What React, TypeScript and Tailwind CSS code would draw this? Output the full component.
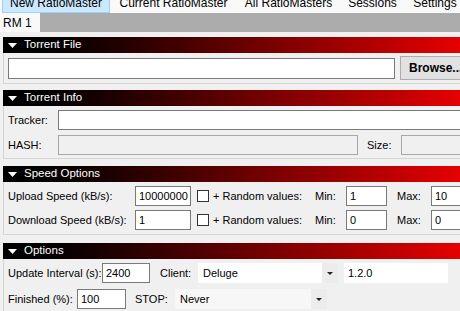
import React from 'react';

function Header({ title }: { title: string }) {
  return (
    <div className="flex h-[16px] items-center bg-gradient-to-r from-black via-[#6e0000] to-[#ff0000] text-[11.5px] text-white">
      <svg width="9" height="5" viewBox="0 0 9 5" className="ml-[5px] mr-[7px]">
        <polygon points="0,0 9,0 4.5,5" fill="#fff" />
      </svg>
      <span>{title}</span>
    </div>
  );
}

function Group({ title, children, className = '' }: { title: string; children: React.ReactNode; className?: string }) {
  return (
    <div className={`ml-[3px] ${className}`}>
      <Header title={title} />
      <div className="border border-t-0 border-[#d5d5d5] pl-[4px]">{children}</div>
    </div>
  );
}

function Input({ w, value = '', disabled = false, className = '' }: { w: string; value?: string; disabled?: boolean; className?: string }) {
  return (
    <div
      className={`flex h-[20px] items-center border px-[3px] ${w} ${
        disabled ? 'border-[#a8a8a8] bg-[#f0f0f0]' : 'border-[#7a7a7a] bg-white'
      } ${className}`}
    >
      {value}
    </div>
  );
}

function Check() {
  return <div className="ml-[6px] mr-[4px] h-[12px] w-[12px] border border-[#333] bg-white" />;
}

function Select({ w, value, bg }: { w: string; value: string; bg: string }) {
  return (
    <div className={`flex h-[20px] items-center ${w} ${bg}`}>
      <span className="flex-1 pl-[5px]">{value}</span>
      <div className="flex h-full w-[16px] items-center justify-center bg-[#ececec]">
        <svg width="6" height="3" viewBox="0 0 6 3">
          <polygon points="0,0 6,0 3,3" fill="#222" />
        </svg>
      </div>
    </div>
  );
}

const menu = [
  { label: 'New RatioMaster', w: 'w-[108px]' },
  { label: 'Current RatioMaster', w: 'w-[127px]' },
  { label: 'All RatioMasters', w: 'w-[103px]' },
  { label: 'Sessions', w: 'w-[65px]' },
  { label: 'Settings', w: 'w-[60px]' },
];

export default function App() {
  return (
    <div className="h-[311px] w-[460px] overflow-hidden bg-[#f0f0f0] font-['Liberation_Sans',Arial,sans-serif] text-[11px] text-black">
      <div className="w-[500px]">
        {/* menu strip, scrolled so text is clipped at top */}
        <div className="h-[13px] overflow-hidden bg-[#f9f9f9]">
          <div className="-mt-[7px] flex h-[20px] items-stretch pl-[2px] text-[12px]">
            {menu.map((m, i) => (
              <div
                key={m.label}
                className={`flex items-center justify-center whitespace-nowrap border ${m.w} ${
                  i === 0 ? 'border-[#99d1ff] bg-[#cce8ff]' : 'border-transparent'
                }`}
              >
                {m.label}
              </div>
            ))}
          </div>
        </div>

        {/* tab strip */}
        <div className="flex h-[19px]">
          <div className="flex w-[40px] items-center bg-[#f9f9f9] pl-[3px] text-[12px]">RM 1</div>
          <div className="flex-1 bg-[#acacac]" />
        </div>

        <div className="pt-[5px]">
          <Group title="Torrent File">
            <div className="flex items-center pb-[3px] pt-[3px]">
              <Input w="w-[387px]" className="h-[21px]" />
              <button className="ml-[5px] h-[24px] w-[76px] border border-[#adadad] bg-[#e1e1e1] pl-[8px] text-left text-[12px] font-bold">
                Browse...
              </button>
            </div>
          </Group>

          <Group title="Torrent Info" className="mt-[6px]">
            <div className="flex items-center pt-[4px]">
              <span className="w-[50px]">Tracker:</span>
              <Input w="w-[420px]" />
            </div>
            <div className="flex items-center pb-[3px] pt-[5px]">
              <span className="w-[50px]">HASH:</span>
              <Input w="w-[300px]" disabled />
              <span className="ml-[9px] w-[34px]">Size:</span>
              <Input w="w-[80px]" disabled />
            </div>
          </Group>

          <Group title="Speed Options" className="mt-[7px]">
            {[
              ['Upload Speed (kB/s):', '10000000', '1', '10'],
              ['Download Speed (kB/s):', '1', '0', '0'],
            ].map(([label, v, min, max], i) => (
              <div key={label} className={`flex items-center ${i === 0 ? 'pt-[4px]' : 'pb-[4px] pt-[4px]'}`}>
                <span className="w-[127px]">{label}</span>
                <Input w="w-[56px]" value={v} />
                <Check />
                <span className="w-[102px]">+ Random values:</span>
                <span className="w-[31px]">Min:</span>
                <Input w="w-[41px]" value={min} />
                <span className="ml-[10px] w-[34px]">Max:</span>
                <Input w="w-[40px]" value={max} />
              </div>
            ))}
          </Group>

          <Group title="Options" className="mt-[8px]">
            <div className="flex items-center pt-[4px]">
              <span className="w-[94px]">Update Interval (s):</span>
              <Input w="w-[48px]" value="2400" />
              <span className="ml-[10px] w-[38px]">Client:</span>
              <Select w="w-[140px]" value="Deluge" bg="bg-white" />
              <div className="ml-[6px] flex h-[20px] w-[104px] items-center bg-white pl-[4px]">1.2.0</div>
            </div>
            <div className="flex items-center pb-[3px] pt-[6px]">
              <span className="w-[69px]">Finished (%):</span>
              <Input w="w-[49px]" value="100" />
              <span className="ml-[9px] w-[40px]">STOP:</span>
              <Select w="w-[152px]" value="Never" bg="bg-[#f7f7f7]" />
            </div>
          </Group>
        </div>
      </div>
    </div>
  );
}
